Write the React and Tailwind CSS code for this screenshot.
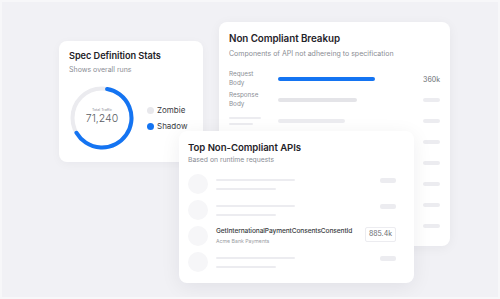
import React from "react";

const font = { fontFamily: "Inter, 'Noto Sans', sans-serif" };

function Donut() {
  return (
    <svg width="64" height="64" viewBox="0 0 64 64" className="shrink-0">
      <circle cx="32" cy="32" r="29.5" fill="none" stroke="#ebebef" strokeWidth="4" />
      <path
        d="M 37.12 2.95 A 29.5 29.5 0 1 1 6.45 46.75"
        fill="none"
        stroke="#1474f2"
        strokeWidth="4"
        strokeLinecap="round"
      />
    </svg>
  );
}

function SpecCard() {
  return (
    <div className="absolute left-[59px] top-[41px] w-[144px] h-[121px] bg-white rounded-[8px] shadow-[0_2px_10px_rgba(20,20,40,0.04)] pl-[10px] pt-[9px]">
      <div className="text-[9.2px] leading-[11px] font-semibold text-[#1f2329] tracking-[-0.05px]">Spec Definition Stats</div>
      <div className="mt-[4px] text-[7px] leading-[9px] text-[#8a8d94]">Shows overall runs</div>
      <div className="mt-[12px] flex items-center">
        <div className="relative ml-[1px] w-[64px] h-[64px]">
          <Donut />
          <div className="absolute inset-0 flex flex-col items-center justify-center">
            <div className="text-[3.6px] leading-[5px] text-[#8a8d94] mt-[-3px]">Total Traffic</div>
            <div className="text-[10.5px] leading-[12px] text-[#5a5d63] font-light">71,240</div>
          </div>
        </div>
        <div className="ml-[13px] flex flex-col gap-[5px]">
          <div className="flex items-center gap-[3px]">
            <span className="w-[7px] h-[7px] rounded-full bg-[#e8e8ec]" />
            <span className="text-[8px] leading-[11px] text-[#3a3d42]">Zombie</span>
          </div>
          <div className="flex items-center gap-[3px]">
            <span className="w-[7px] h-[7px] rounded-full bg-[#1474f2]" />
            <span className="text-[8px] leading-[11px] text-[#3a3d42]">Shadow</span>
          </div>
        </div>
      </div>
    </div>
  );
}

function BreakRow({ label, bar, barColor, value }) {
  return (
    <div className="flex items-center h-[21px]">
      <div className="w-[49px] shrink-0">
        {label ? (
          <div className="text-[6.3px] leading-[8.5px] text-[#8a8d94]">
            {label[0]}
            <br />
            {label[1]}
          </div>
        ) : (
          <div className="flex flex-col gap-[4px]">
            <div className="w-[32px] h-[2px] rounded-full bg-[#ececf0]" />
            <div className="w-[24px] h-[2px] rounded-full bg-[#ececf0]" />
          </div>
        )}
      </div>
      <div className="flex-1">
        <div className={`h-[4px] rounded-full ${barColor}`} style={{ width: bar }} />
      </div>
      <div className="w-[30px] flex justify-end">
        {value ? (
          <span className="text-[7px] leading-[9px] text-[#6a6d73] mt-[2px]">{value}</span>
        ) : (
          <div className="w-[17px] h-[4px] rounded-[2px] bg-[#ececf0]" />
        )}
      </div>
    </div>
  );
}

function BreakupCard() {
  return (
    <div className="absolute left-[219px] top-[22px] w-[231px] h-[224px] bg-white rounded-[8px] shadow-[0_2px_12px_rgba(20,20,40,0.05)] pl-[10px] pr-[10px] pt-[11px]">
      <div className="text-[9.8px] leading-[12px] font-semibold text-[#1f2329] tracking-[-0.05px]">Non Compliant Breakup</div>
      <div className="mt-[4px] text-[7px] leading-[9px] text-[#8a8d94]">Components of API not adhereing to specification</div>
      <div className="mt-[10px] flex flex-col">
        <BreakRow label={["Request", "Body"]} bar="97px" barColor="bg-[#1474f2]" value="360k" />
        <BreakRow label={["Response", "Body"]} bar="79px" barColor="bg-[#e4e4e8]" />
        <BreakRow bar="67px" barColor="bg-[#ececf0]" />
        <BreakRow bar="60px" barColor="bg-[#ececf0]" />
        <BreakRow bar="60px" barColor="bg-[#ececf0]" />
        <BreakRow bar="60px" barColor="bg-[#ececf0]" />
        <BreakRow bar="60px" barColor="bg-[#ececf0]" />
        <BreakRow bar="60px" barColor="bg-[#ececf0]" />
      </div>
    </div>
  );
}

function ApiRow({ name, sub, value }) {
  return (
    <div className="flex items-center h-[26px]">
      <div className="w-[20px] h-[20px] rounded-full bg-[#f6f6f8] shrink-0" />
      <div className="ml-[8px] flex-1">
        {name ? (
          <div>
            <div className="text-[6.6px] leading-[9px] font-medium text-[#3a3d42] tracking-[-0.1px]">{name}</div>
            <div className="mt-[2px] text-[5.2px] leading-[7px] text-[#9a9da3]">{sub}</div>
          </div>
        ) : (
          <div className="flex flex-col gap-[7px]">
            <div className="w-[79px] h-[2px] rounded-full bg-[#ececf0]" />
            <div className="w-[60px] h-[2px] rounded-full bg-[#ececf0]" />
          </div>
        )}
      </div>
      <div className="flex justify-end">
        {value ? (
          <span className="px-[3px] h-[15px] flex items-center border border-[#ececf0] rounded-[2px] text-[7px] text-[#6a6d73] mt-[-3px]">{value}</span>
        ) : (
          <div className="w-[16px] h-[5px] rounded-[2px] bg-[#ececf0] mb-[8px]" />
        )}
      </div>
    </div>
  );
}

function ApisCard() {
  return (
    <div className="absolute left-[179px] top-[131px] w-[235px] h-[152px] bg-white rounded-[8px] shadow-[0_4px_20px_rgba(20,20,40,0.07)] pl-[9px] pr-[18px] pt-[11px]">
      <div className="text-[9.6px] leading-[12px] font-semibold text-[#1f2329] tracking-[-0.05px]">Top Non-Compliant APIs</div>
      <div className="mt-[1px] text-[6.8px] leading-[9px] text-[#8a8d94]">Based on runtime requests</div>
      <div className="mt-[7px] flex flex-col">
        <ApiRow />
        <ApiRow />
        <ApiRow name="GetInternationalPaymentConsentsConsentId" sub="Acme Bank Payments" value="885.4k" />
        <ApiRow />
      </div>
    </div>
  );
}

export default function App() {
  return (
    <div className="w-[500px] h-[299px] bg-[#f7f7f9] p-[2px]" style={font}>
      <div className="relative w-full h-full bg-[#f1f1f5] overflow-hidden">
        <div className="absolute left-[-2px] top-[-2px] w-[500px] h-[299px]">
          <SpecCard />
          <BreakupCard />
          <ApisCard />
        </div>
      </div>
    </div>
  );
}
